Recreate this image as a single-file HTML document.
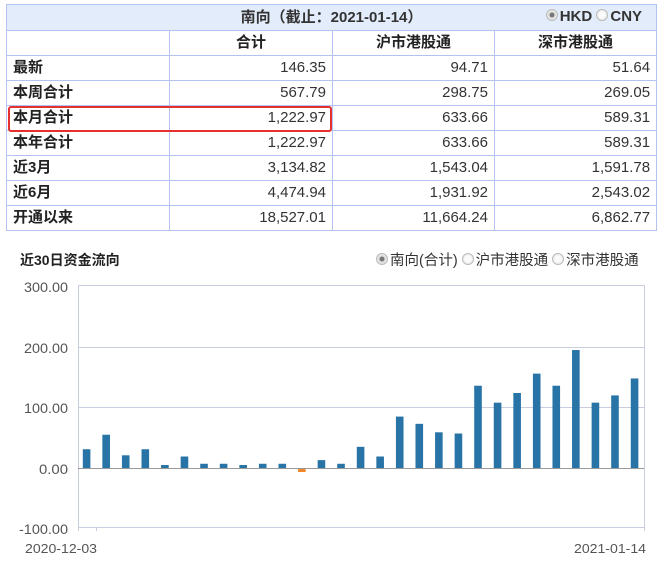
<!DOCTYPE html>
<html><head><meta charset="utf-8"><style>
body{margin:0;width:659px;height:571px;background:#fff;font-family:"Liberation Sans","Noto Sans CJK SC",sans-serif;position:relative;overflow:hidden}
table{position:absolute;left:6px;top:4px;border-collapse:collapse;width:650px;table-layout:fixed}
td{border:1px solid #b4c2f0;height:24px;padding:0 6px;font-size:15px;color:#333;text-align:right;line-height:24px}
td.l{text-align:left;font-weight:bold;color:#222}
tr.h td{text-align:center;font-weight:bold;color:#222}
tr.t td{background:#e2ecfa;text-align:center;font-weight:bold;height:25px;position:relative}
.rb{position:absolute;left:8px;top:106px;width:320px;height:22px;border:2px solid #e53030;border-radius:3px}
.rad{display:inline-block;box-sizing:border-box;width:12px;height:12px;border-radius:50%;border:1px solid #bbb;background:radial-gradient(circle,#777 0 30%,#ddd 40%,#f4f4f4 100%);vertical-align:0px;margin-right:2px}
.rad.off{background:radial-gradient(circle,#fafafa 0 40%,#ddd 100%)}
.lg .rad{margin-left:4px}
</style></head><body>
<table>
<col style="width:163px"><col style="width:163px"><col style="width:162px"><col style="width:162px">
<tr class="t"><td colspan="4">南向（截止：2021-01-14）<span style="position:absolute;right:14px;top:0;font-size:15px"><span class="rad"></span>HKD <span class="rad off"></span>CNY</span></td></tr>
<tr class="h"><td></td><td>合计</td><td>沪市港股通</td><td>深市港股通</td></tr>
<tr><td class="l">最新</td><td>146.35</td><td>94.71</td><td>51.64</td></tr>
<tr><td class="l">本周合计</td><td>567.79</td><td>298.75</td><td>269.05</td></tr>
<tr><td class="l">本月合计</td><td>1,222.97</td><td>633.66</td><td>589.31</td></tr>
<tr><td class="l">本年合计</td><td>1,222.97</td><td>633.66</td><td>589.31</td></tr>
<tr><td class="l">近3月</td><td>3,134.82</td><td>1,543.04</td><td>1,591.78</td></tr>
<tr><td class="l">近6月</td><td>4,474.94</td><td>1,931.92</td><td>2,543.02</td></tr>
<tr><td class="l">开通以来</td><td>18,527.01</td><td>11,664.24</td><td>6,862.77</td></tr>
</table>
<div class="rb"></div>
<div style="position:absolute;left:20px;top:250px;font-size:14px;font-weight:bold;color:#222">近30日资金流向</div>
<div class="lg" style="position:absolute;left:372px;top:249px;font-size:14.5px;color:#333"><span class="rad"></span>南向(合计)<span class="rad off"></span>沪市港股通<span class="rad off"></span>深市港股通</div>
<svg style="position:absolute;left:0;top:0" width="659" height="571">
<g stroke="#c8cde0" stroke-width="1">
<line x1="78" y1="285.5" x2="644" y2="285.5"/><line x1="78" y1="347.5" x2="644" y2="347.5"/><line x1="78" y1="407.5" x2="644" y2="407.5"/><line x1="78" y1="527.5" x2="644" y2="527.5"/>
<line x1="78.5" y1="285" x2="78.5" y2="531"/><line x1="644.5" y1="285" x2="644.5" y2="531"/><line x1="96.5" y1="527" x2="96.5" y2="531"/>
</g>
<line x1="78" y1="468.5" x2="644" y2="468.5" stroke="#999" stroke-width="1"/>
<g font-family="Liberation Sans,sans-serif" font-size="14" fill="#555" text-anchor="end">
<text x="68" y="292" textLength="44" lengthAdjust="spacingAndGlyphs">300.00</text><text x="68" y="353" textLength="44" lengthAdjust="spacingAndGlyphs">200.00</text><text x="68" y="413" textLength="44" lengthAdjust="spacingAndGlyphs">100.00</text><text x="68" y="474" textLength="29" lengthAdjust="spacingAndGlyphs">0.00</text><text x="68" y="534" textLength="49" lengthAdjust="spacingAndGlyphs">-100.00</text>
</g>
<g font-family="Liberation Sans,sans-serif" font-size="13" fill="#555"><text x="25" y="553" textLength="72" lengthAdjust="spacingAndGlyphs">2020-12-03</text><text x="574" y="553" textLength="72" lengthAdjust="spacingAndGlyphs">2021-01-14</text></g>
<g id="b" fill="#2874a6"></g>
</svg>
<script>
var v=[31,55,21,31,5,19,7,7,5,7,7,-5,13,7,35,19,85,73,59,57,136,108,124,156,136,195,108,120,148];
var g=document.getElementById('b'),s='';
for(var i=0;i<v.length;i++){var x=86.6+i*19.57-3.8,h=Math.abs(v[i])*0.605;
if(v[i]>=0)s+='<rect x="'+x+'" y="'+(468-h)+'" width="7.6" height="'+h+'"/>';
else s+='<rect x="'+x+'" y="469" width="7.6" height="'+h+'" fill="#f0882a"/>';}
g.innerHTML=s;
</script>
</body></html>
